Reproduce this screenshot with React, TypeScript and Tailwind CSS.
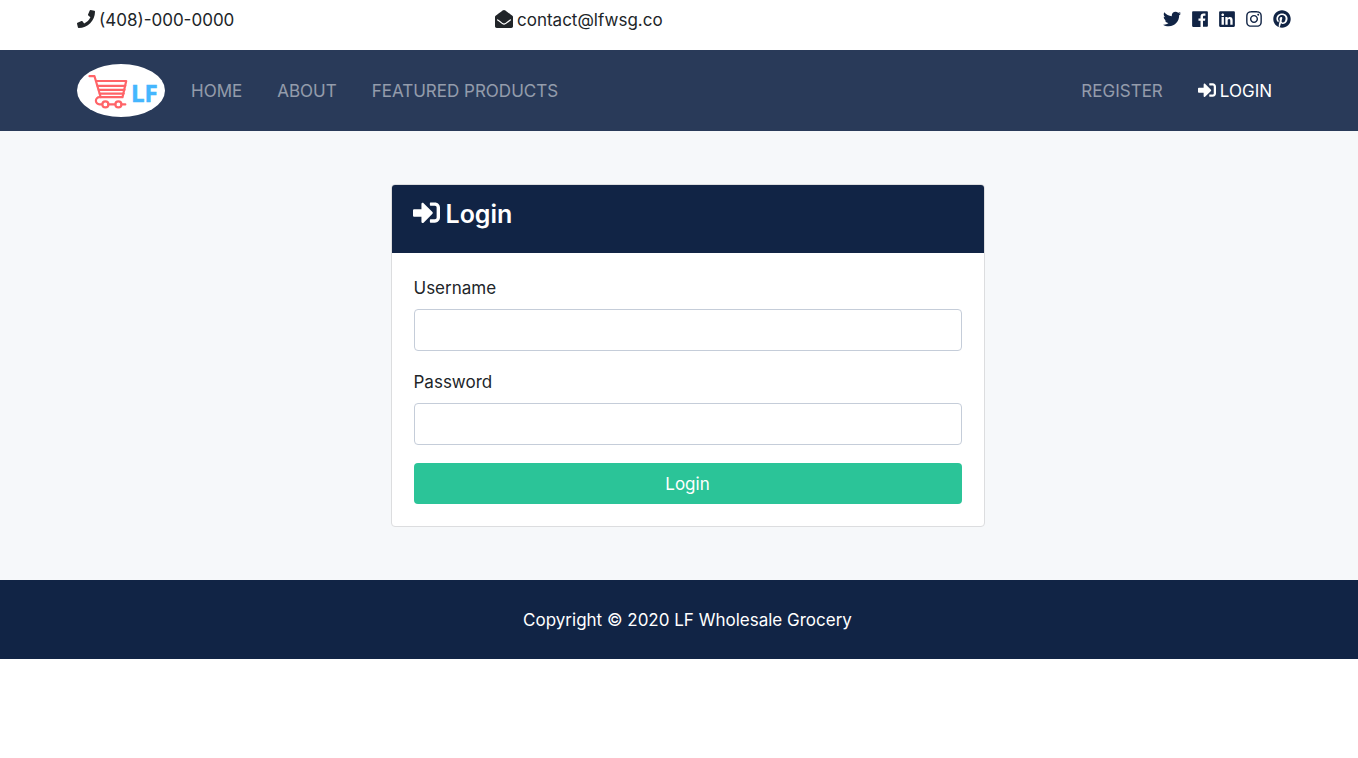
import React from "react";
import {
  FaPhone,
  FaEnvelopeOpen,
  FaTwitter,
  FaLinkedin,
  FaInstagram,
  FaPinterest,
  FaSignInAlt,
} from "react-icons/fa";

const socials = [
  { name: "Twitter", icon: FaTwitter, size: "size-[18px]" },
  { name: "Facebook", icon: FacebookSquare, size: "h-[18px] w-4" },
  { name: "LinkedIn", icon: FaLinkedin, size: "h-[18px] w-4" },
  { name: "Instagram", icon: FaInstagram, size: "h-[18px] w-4" },
  { name: "Pinterest", icon: FaPinterest, size: "size-[18px]" },
];

function FacebookSquare({ className }: { className?: string }) {
  return (
    <svg viewBox="0 0 448 512" fill="currentColor" className={className} aria-hidden="true">
      <path d="M448 56.700v398.500c0 13.700-11.100 24.700-24.700 24.700H309.100V306.500h58.200l8.700-67.600h-67v-43.200c0-19.600 5.400-32.900 33.500-32.900h35.800v-60.500c-6.200-.8-27.400-2.700-52.200-2.700-51.600 0-87 31.500-87 89.400v49.900h-58.400v67.600h58.400V480H24.700C11.100 480 0 468.900 0 455.300V56.700C0 43.100 11.100 32 24.700 32h398.500c13.700 0 24.800 11.100 24.800 24.700z" />
    </svg>
  );
}

function Logo() {
  return (
    <svg viewBox="0 0 88 53" className="h-[53px] w-[88px]" role="img" aria-label="LF">
      <ellipse cx="44" cy="26.500" rx="44" ry="26.500" fill="#fff" />
      <g fill="none" stroke="#ff6468" strokeWidth="2.200" strokeLinecap="round" strokeLinejoin="round">
        <path d="M12.500 12.200H17.500L23.700 33.200H45.500L49.200 17H19" />
        <path d="M20.500 21.800H48.300M21.800 25.800H47.500M22.800 29.600H46.700" />
        <path d="M23.700 33.200H22.500A3.600 3.600 0 0 0 22.500 40.400H25M31.300 40.400H38.200M44.500 40.400H48.300" />
        <circle cx="28.400" cy="40.400" r="3" />
        <circle cx="41.400" cy="40.400" r="3" />
      </g>
      <text
        x="54"
        y="38"
        fill="#45b6fe"
        stroke="#45b6fe"
        strokeWidth="0.500"
        fontFamily="'Open Sans', sans-serif"
        fontWeight="700"
        fontSize="24"
      >
        LF
      </text>
    </svg>
  );
}

function Field({ id, label, type }: { id: string; label: string; type: string }) {
  return (
    <div className="mb-[18px]">
      <label htmlFor={id} className="mb-2 block">
        {label}
      </label>
      <input
        id={id}
        name={id}
        type={type}
        className="block h-[42px] w-full rounded border border-[#c5cdd9] bg-white px-3 outline-none focus:border-[#2bc498]"
      />
    </div>
  );
}

export default function App() {
  const container = "pl-[77px] pr-[60px]";
  return (
    <div className="min-h-screen bg-white font-['Inter',sans-serif] text-[17px] leading-[26px] text-[#212529]">
      <header className={container}>
        <div className="grid h-[50px] grid-cols-3 items-start pt-[7px]">
          <div className="flex items-start gap-1">
            <FaPhone className="mt-[3px] size-[18px]" />
            <span>(408)-000-0000</span>
          </div>
          <div className="flex items-start gap-1 pl-[11px]">
            <FaEnvelopeOpen className="mt-[3px] size-[18px]" />
            <span>contact@lfwsg.co</span>
          </div>
          <div className="flex items-start justify-end gap-[11px] pt-[3px] pr-[7px] text-[#112445]">
            {socials.map(({ name, icon: Icon, size }) => (
              <a key={name} href="#" aria-label={name}>
                <Icon className={size} />
              </a>
            ))}
          </div>
        </div>
      </header>

      <nav className={`${container} flex h-[81px] items-center bg-[#293a59] text-white/50`}>
        <a href="#">
          <Logo />
        </a>
        <div className="ml-[26px] flex flex-1 gap-[35px]">
          <a href="#">HOME</a>
          <a href="#">ABOUT</a>
          <a href="#">FEATURED PRODUCTS</a>
        </div>
        <div className="flex gap-[35px] pr-[26px]">
          <a href="#">REGISTER</a>
          <a href="#" className="flex items-start gap-1 text-white">
            <FaSignInAlt className="mt-[3px] size-[18px]" />
            LOGIN
          </a>
        </div>
      </nav>

      <main className={`${container} bg-[#f6f8fa] py-[53px]`}>
        <section className="mx-auto max-w-[594px] rounded border border-[#dcdddf] bg-white">
          <div className="h-[68px] rounded-t-[3px] bg-[#112445] px-[21px] pt-[13px] text-white">
            <h1 className="flex items-start gap-[6px] text-[25px] leading-[32px] font-semibold">
              <FaSignInAlt className="mt-px size-[27px]" />
              Login
            </h1>
          </div>
          <form className="p-[22px]" onSubmit={(e) => e.preventDefault()}>
            <Field id="username" label="Username" type="text" />
            <Field id="password" label="Password" type="password" />
            <button type="submit" className="block h-[41px] w-full rounded bg-[#2bc498] text-white">
              Login
            </button>
          </form>
        </section>
      </main>

      <footer className={`${container} flex h-[79px] items-center justify-center bg-[#112445] text-center text-white`}>
        Copyright © 2020 LF Wholesale Grocery
      </footer>
    </div>
  );
}
